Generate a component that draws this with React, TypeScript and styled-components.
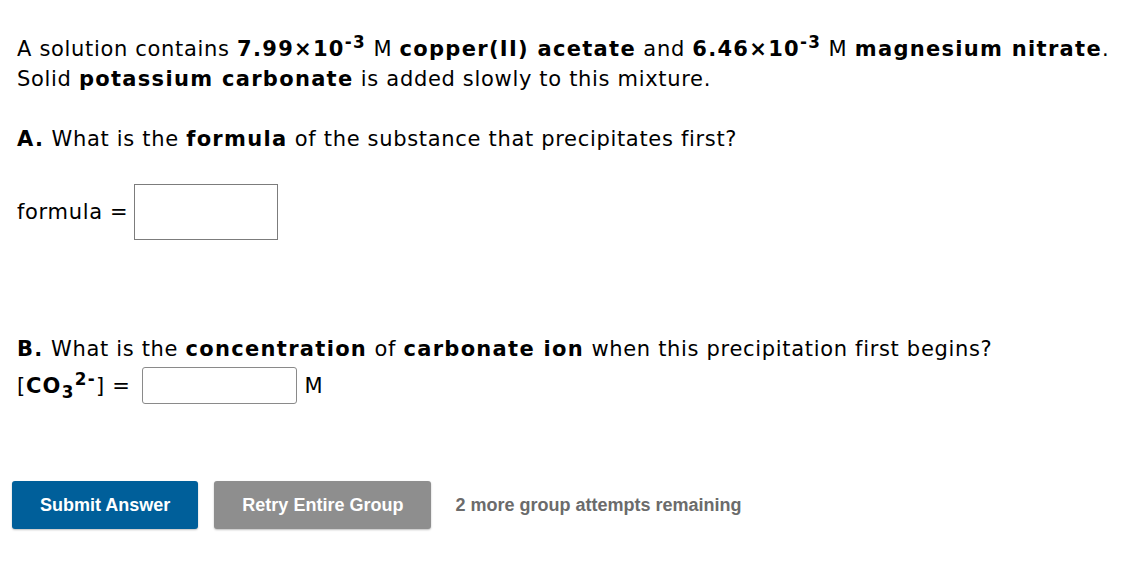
import React from "react";
import styled, { createGlobalStyle } from "styled-components";

const GlobalStyle = createGlobalStyle`
  html, body {
    margin: 0;
    padding: 0;
    background: #ffffff;
  }
  body {
    font-family: "DejaVu Sans", Verdana, sans-serif;
    color: #000;
  }
  b {
    letter-spacing: 1.3px;
  }
`;

const Page = styled.div`
  width: 1143px;
  height: 561px;
  padding: 34px 0 0 17px;
  box-sizing: border-box;
  font-size: 21px;
  line-height: 30px;
  letter-spacing: 0.68px;
`;

const Paragraph = styled.p<{ $gap?: number }>`
  margin: 0 0 ${(p) => p.$gap ?? 0}px 0;
  white-space: nowrap;
`;

const Sup = styled.sup`
  font-size: 0.8em;
  line-height: 0;
  vertical-align: 0.45em;
`;

const Sub = styled.sub`
  font-size: 0.8em;
  line-height: 0;
  vertical-align: -0.3em;
`;

const AnswerRow = styled.div<{ $gap?: number }>`
  display: flex;
  align-items: center;
  margin-bottom: ${(p) => p.$gap ?? 0}px;
  white-space: nowrap;
`;

const Label = styled.span`
  margin-right: 6px;
`;

const FormulaBox = styled.div`
  width: 144px;
  height: 56px;
  border: 1px solid #7c7c7c;
  box-sizing: border-box;
`;

const ConcBox = styled.div`
  width: 155px;
  height: 37px;
  border: 1px solid #8a8a8a;
  border-radius: 3px;
  box-sizing: border-box;
  margin: 0 8px 0 5px;
`;

const Footer = styled.div`
  display: flex;
  align-items: center;
  margin-left: -5px;
  letter-spacing: 0;
  font-family: "Liberation Sans", Arial, sans-serif;
`;

const Button = styled.button<{ $variant: "primary" | "muted" }>`
  height: 48px;
  padding: 0 28px;
  border: none;
  border-radius: 3px;
  font-family: "Liberation Sans", Arial, sans-serif;
  font-weight: bold;
  font-size: 18px;
  color: #ffffff;
  background: ${(p) => (p.$variant === "primary" ? "#005f9a" : "#8e8e8e")};
  box-shadow: 0 1px 2px rgba(0, 0, 0, 0.25);
  margin-right: 16px;
  cursor: pointer;
`;

const Remaining = styled.span`
  margin-left: 8px;
  font-size: 18px;
  font-weight: bold;
  color: #6b6b6b;
`;

const App: React.FC = () => {
  return (
    <>
      <GlobalStyle />
      <Page>
        <Paragraph $gap={30}>
          A solution contains <b>7.99×10<Sup>-3</Sup></b> M <b>copper(II) acetate</b> and{" "}
          <b>6.46×10<Sup>-3</Sup></b> M <b>magnesium nitrate</b>.
          <br />
          Solid <b>potassium carbonate</b> is added slowly to this mixture.
        </Paragraph>
        <Paragraph $gap={30}>
          <b>A.</b> What is the <b>formula</b> of the substance that precipitates first?
        </Paragraph>
        <AnswerRow $gap={94}>
          <Label>formula =</Label>
          <FormulaBox />
        </AnswerRow>
        <Paragraph $gap={3}>
          <b>B.</b> What is the <b>concentration</b> of <b>carbonate ion</b> when this precipitation first begins?
        </Paragraph>
        <AnswerRow $gap={77}>
          <Label>
            [<b>CO<Sub>3</Sub>
            <Sup>2-</Sup></b>] =
          </Label>
          <ConcBox />
          <span>M</span>
        </AnswerRow>
        <Footer>
          <Button $variant="primary">Submit Answer</Button>
          <Button $variant="muted">Retry Entire Group</Button>
          <Remaining>2 more group attempts remaining</Remaining>
        </Footer>
      </Page>
    </>
  );
};

export default App;
